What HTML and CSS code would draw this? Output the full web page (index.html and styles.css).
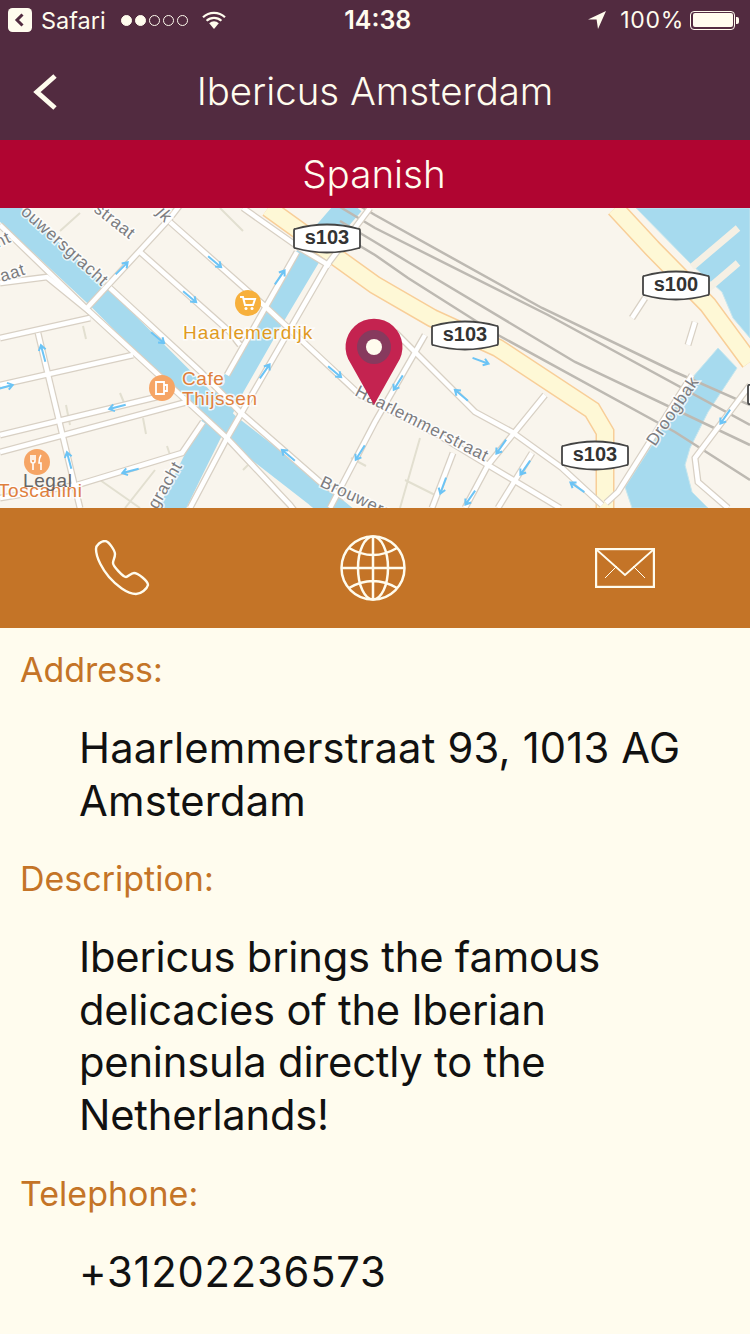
FILE: index.html
```html
<!DOCTYPE html>
<html lang="en">
<head>
<meta charset="utf-8">
<title>Ibericus Amsterdam</title>
<link rel="stylesheet" href="styles.css">
</head>
<body>
<header class="top">
  <div class="status">
    <div class="status-left">
      <svg class="crumb" viewBox="0 0 24 24"><rect width="24" height="24" rx="4.5" fill="#fffcee"/><path d="M14.5 6.5 9 12l5.5 5.5" fill="none" stroke="#522b40" stroke-width="3"/></svg>
      <span class="status-text">Safari</span>
      <div class="dots"><i class="dot on"></i><i class="dot on"></i><i class="dot"></i><i class="dot"></i><i class="dot"></i></div>
      <svg class="wifi" viewBox="0 0 24 18"><path d="M1 6.2a16 16 0 0 1 22 0M4.6 9.8a11 11 0 0 1 14.8 0" fill="none" stroke="#fffcee" stroke-width="2.2"/><path d="M7.2 12.2a7 7 0 0 1 9.6 0L12 18z" fill="#fffcee"/></svg>
    </div>
    <div class="clock">14:38</div>
    <div class="status-right">
      <svg class="loc" viewBox="0 0 18 18"><path d="M18 0 0 8.5h8.6L10 18z" fill="#fffcee"/></svg>
      <span class="status-text pct">100%</span>
      <div class="battery"><div class="battery-fill"></div></div>
      <div class="battery-nub"></div>
    </div>
  </div>
  <div class="nav">
    <svg class="back" viewBox="0 0 24 36"><path d="M22 2 4 18l18 16" fill="none" stroke="#fffcee" stroke-width="5"/></svg>
    <h1 class="title">Ibericus Amsterdam</h1>
    <span class="nav-end"></span>
  </div>
</header>
<div class="cuisine">Spanish</div>

<svg class="map" viewBox="0 0 750 300" role="img" aria-label="Map">
  <defs>
    <g id="streets">
      <path d="M0 17 90 104 227 230 290 297 300 310"/>
      <path d="M110 80 200 163 240 204 320 274 345 290"/>
      <path d="M87 100 170 10 180-3"/>
      <path d="M140 44 230 124 240 137"/>
      <path d="M170 14 267 100 360 187 440 228 488 257 560 300"/>
      <path d="M243 0 300 40 330 58"/>
      <path d="M395 124 415 144 475 204 512 224 562 260 602 297"/>
      <path d="M425 127 375 214 330 300"/>
      <path d="M545 187 488 257 465 300"/>
      <path d="M532 245 498 300"/>
      <path d="M453 245 432 300"/>
      <path d="M370 0 327 57 227 230 190 300"/>
      <path d="M297 44 227 167"/>
      <path d="M0 130 90 110"/>
      <path d="M0 177 133 147"/>
      <path d="M0 227 157 189"/>
      <path d="M0 244 187 194"/>
      <path d="M0 290 77 277 182 245 203 214"/>
      <path d="M0 75 47 69 90 104"/>
      <path d="M38 125 80 300"/>
      <path d="M750 177 695 250 698 274 728 300"/>
      <path d="M692 167 618 284 606 295"/>
      <path d="M688 137 695 114"/>
      <path d="M632 110 645 90"/>
    </g>
    <path id="arrow" d="M-9 0H8M3-3.5 8 0 3 3.5" fill="none" stroke="#6cc4f5" stroke-width="2"/>
    <path id="shield" d="M1 7Q33-2 65 7 66 7 66 9V24Q66 26 65 26 33 35 1 26 0 26 0 24V9Q0 7 1 7Z" fill="#fff" stroke="#444" stroke-width="1.8"/>
  </defs>

  <rect width="750" height="300" fill="#f9f5ed"/>
  <g class="minor">
    <path d="M60 23 80 5M220 0 243 23M83 118l3 13M120 185l5 12M66 197l4 20M143 210l3 16M167 238l4 12M243 262l8-8M100 272l40 28M155 262l-30 38M351 250l15 8M420 230l-20 70M405 272l30 15"/>
  </g>
  <path class="water" d="M636 0H750V130L733 110 722 84 692 57Z"/>
  <path class="water" d="M718 140 692 170 652 237 625 279 632 300H708L692 284 685 257 690 240 708 204 737 160Z"/>
  <path class="canal" d="M-5-8 97 87 227 217 317 287 345 310"/>
  <path class="canal" d="M352-5 313 40 273 107 233 177 190 264 170 305"/>
  <path class="pier" d="M692 59 738 20M703 85 738 55"/>

  <path class="rail" d="M340-14 375 7 542 100 675 164 750 197"/>
  <path class="rail" d="M340-1 375 20 548 107 750 217"/>
  <path class="rail" d="M340 13 375 34 408 54 575 154 750 237"/>
  <path class="rail" d="M340 26 375 47 408 70 498 127 675 224 750 272"/>

  <g class="hw-case"><path d="M268 0 375 77 432 110 498 140 592 202 605 224 605 300"/><path d="M615 0 652 40 708 97 750 154"/></g>
  <g class="hw-fill"><path d="M268 0 375 77 432 110 498 140 592 202 605 224 605 300"/><path d="M615 0 652 40 708 97 750 154"/></g>

  <use href="#streets" class="st-case"/>
  <use href="#streets" class="st-fill"/>

  <g>
    <use href="#arrow" transform="translate(122 60) rotate(-45)"/>
    <use href="#arrow" transform="translate(215 54) rotate(40)"/>
    <use href="#arrow" transform="translate(190 89) rotate(40)"/>
    <use href="#arrow" transform="translate(158 130) rotate(40)"/>
    <use href="#arrow" transform="translate(280 69) rotate(-55)"/>
    <use href="#arrow" transform="translate(265 163) rotate(-55)"/>
    <use href="#arrow" transform="translate(335 164) rotate(40)"/>
    <use href="#arrow" transform="translate(43 145) rotate(-105)"/>
    <use href="#arrow" transform="translate(5 179) rotate(-15)"/>
    <use href="#arrow" transform="translate(117 199) rotate(165)"/>
    <use href="#arrow" transform="translate(69 252) rotate(-105)"/>
    <use href="#arrow" transform="translate(130 263) rotate(165)"/>
    <use href="#arrow" transform="translate(288 247) rotate(-140)"/>
    <use href="#arrow" transform="translate(360 245) rotate(122)"/>
    <use href="#arrow" transform="translate(398 175) rotate(122)"/>
    <use href="#arrow" transform="translate(481 153) rotate(20)"/>
    <use href="#arrow" transform="translate(461 187) rotate(-140)"/>
    <use href="#arrow" transform="translate(501 239) rotate(125)"/>
    <use href="#arrow" transform="translate(525 260) rotate(125)"/>
    <use href="#arrow" transform="translate(443 278) rotate(110)"/>
    <use href="#arrow" transform="translate(470 290) rotate(125)"/>
    <use href="#arrow" transform="translate(577 279) rotate(-145)"/>
    <use href="#arrow" transform="translate(725 209) rotate(125)"/>
  </g>

  <g class="road-label">
    <text transform="translate(20 5) rotate(42)">ouwersgracht</text>
    <text transform="translate(93 3) rotate(38)">straat</text>
    <text transform="translate(-4 76) rotate(-18)">raat</text>
    <text transform="translate(-2 40) rotate(-25)">ht</text>
    <text transform="translate(156 5) rotate(50)">jk</text>
    <text transform="translate(157 302) rotate(-60)">gracht</text>
    <text transform="translate(319 278) rotate(25)">Brouwers</text>
    <text transform="translate(354 187) rotate(27)">Haarlemmerstraat</text>
    <text transform="translate(655 239) rotate(-56)">Droogbak</text>
  </g>

  <g class="poi-label">
    <text class="poi-yellow" x="183" y="131">Haarlemerdijk</text>
    <text class="poi-orange" x="182" y="177">Cafe</text>
    <text class="poi-orange" x="182" y="197">Thijssen</text>
    <text class="poi-orange" x="-2" y="289">Toscanini</text>
    <text class="poi-gray" x="23" y="279">Legal</text>
  </g>

  <circle cx="248" cy="95" r="13" fill="#f7b03c"/>
  <path d="M240 89h3l2 8h8l2-6h-11" fill="none" stroke="#fff" stroke-width="2"/>
  <circle cx="246" cy="100.500" r="1.500" fill="#fff"/>
  <circle cx="252" cy="100.500" r="1.500" fill="#fff"/>
  <circle cx="162" cy="180" r="13" fill="#f6a565"/>
  <path d="M156 174h8v12h-8zM164 177h3v6h-3z" fill="none" stroke="#fff" stroke-width="1.8"/>
  <circle cx="37" cy="254" r="13" fill="#f6a565"/>
  <path d="M31 247v6q0 2 2 2v7M33 247v5M35 247v6q0 2-2 2M41 247q-2 3-2 8h2v7" fill="none" stroke="#fff" stroke-width="1.6"/>

  <use href="#shield" transform="translate(294 14)"/>
  <text class="shield-text" x="327" y="36">s103</text>
  <use href="#shield" transform="translate(432 111)"/>
  <text class="shield-text" x="465" y="133">s103</text>
  <use href="#shield" transform="translate(643 61)"/>
  <text class="shield-text" x="676" y="83">s100</text>
  <use href="#shield" transform="translate(562 231)"/>
  <text class="shield-text" x="595" y="253">s103</text>
  <use href="#shield" transform="translate(748 170)"/>

  <path d="M374 197 351 156A28.500 28.500 0 1 1 397 156Z" fill="#c42350"/>
  <circle cx="374" cy="139" r="17" fill="#873a5e"/>
  <circle cx="374" cy="139" r="8" fill="#fffcee"/>
</svg>

<nav class="actions">
  <svg class="ic-phone" viewBox="0 0 56 56"><path d="M11 1C7 1 2 5 2 9 2 18 9 30 15 37 22 45 33 54 42 54 47 54 53 49 54 45 54 41 44 33 40 33 37 33 34 37 32 37 29 37 19 26 19 23 19 20 21 18 21 14 21 11 15 1 11 1Z" fill="none" stroke="#fffcee" stroke-width="2.400"/></svg>
  <svg class="ic-globe" viewBox="0 0 66 66"><g fill="none" stroke="#fffcee" stroke-width="2.500"><circle cx="33" cy="33" r="31.500"/><ellipse cx="33" cy="33" rx="15" ry="31.500"/><path d="M33 1.500v63M1.500 33h63M9 13q24 14 48 0M9 53q24-14 48 0"/></g></svg>
  <svg class="ic-mail" viewBox="0 0 60 40"><rect x="1" y="1" width="58" height="38" fill="none" stroke="#fffcee" stroke-width="2.400"/><path d="M2 2l28 25L58 2" fill="none" stroke="#fffcee" stroke-width="1.800"/><path d="M10 30 22 18M50 30 38 18" fill="none" stroke="#fffcee" stroke-width="1"/></svg>
</nav>

<main class="details">
  <section class="field">
    <h2 class="label">Address:</h2>
    <p class="value value-address">Haarlemmerstraat 93, 1013 AG Amsterdam</p>
  </section>
  <section class="field">
    <h2 class="label">Description:</h2>
    <p class="value value-text">Ibericus brings the famous delicacies of the Iberian peninsula directly to the Netherlands!</p>
  </section>
  <section class="field">
    <h2 class="label">Telephone:</h2>
    <p class="value value-phone">+31202236573</p>
  </section>
</main>
</body>
</html>
```
FILE: styles.css
```css
* { box-sizing: border-box; }
html, body { margin: 0; padding: 0; }
body {
  width: 750px;
  height: 1334px;
  overflow: hidden;
  background: #fffcee;
  font-family: Inter, "Liberation Sans", sans-serif;
  color: #111;
}
.top { background: #522b40; color: #fffcee; height: 140px; }
.status {
  height: 40px;
  display: grid;
  grid-template-columns: 1fr auto 1fr;
  align-items: center;
  padding: 0 11px 0 8px;
}
.status-left, .status-right { display: flex; align-items: center; }
.status-right { justify-content: flex-end; }
.status-text { font-size: 23.5px; font-weight: 400; }
.pct { font-size: 23px; letter-spacing: .7px; }
.crumb { width: 24px; height: 24px; margin-right: 9px; }
.dots { display: flex; gap: 3px; margin-left: 15px; }
.dot { width: 11px; height: 11px; border-radius: 50%; border: 1.5px solid #fffcee; }
.dot.on { background: #fffcee; }
.wifi { width: 24px; height: 18px; margin-left: 14px; }
.clock { font-size: 25px; font-weight: 600; margin-left: 8.5px; }
.loc { width: 18px; height: 18px; margin-right: 14px; }
.battery {
  width: 45px;
  height: 19px;
  margin-left: 6px;
  border: 1px solid #fffcee;
  border-radius: 4px;
  padding: 1.5px;
}
.battery-fill { width: 100%; height: 100%; background: #fffcee; border-radius: 2px; }
.battery-nub { width: 3px; height: 7px; background: #fffcee; border-radius: 0 2px 2px 0; margin-left: 1px; }
.nav {
  height: 100px;
  display: grid;
  grid-template-columns: 1fr auto 1fr;
  align-items: center;
  padding: 4px 31px 0 33px;
}
.back { width: 24px; height: 36px; }
.title { margin: 0 0 2px -2px; font-size: 38.4px; font-weight: 300; }
.cuisine {
  height: 68px;
  background: #b00531;
  color: #fffcee;
  font-size: 38.6px;
  font-weight: 300;
  line-height: 68px;
  text-align: center;
  padding-right: 2px;
}
.map { display: block; width: 750px; height: 300px; }
.minor path { fill: none; stroke: #e2dfd0; stroke-width: 2; }
.water { fill: #a6daee; stroke: #c6e6ee; stroke-width: 1; }
.canal { fill: none; stroke: #a6daee; stroke-width: 25; }
.pier { fill: none; stroke: #f5f0e4; stroke-width: 7; }
.rail { fill: none; stroke: #bdb9b2; stroke-width: 2.5; }
.hw-case path { fill: none; stroke: #f8ce98; stroke-width: 19; }
.hw-fill path { fill: none; stroke: #fef8d6; stroke-width: 16; }
.st-case { fill: none; stroke: #d8d0c4; stroke-width: 7; }
.st-fill { fill: none; stroke: #fff; stroke-width: 4.5; }
.road-label text {
  font-family: "Liberation Sans", sans-serif;
  font-size: 17px;
  fill: #7c7c80;
  stroke: #fff;
  stroke-width: 3px;
  stroke-opacity: .75;
  paint-order: stroke;
  letter-spacing: .7px;
}
.poi-label text {
  font-family: "Liberation Sans", sans-serif;
  font-size: 19px;
  stroke: #fff;
  stroke-width: 3px;
  stroke-opacity: .8;
  paint-order: stroke;
  letter-spacing: .6px;
}
.poi-label .poi-yellow { fill: #e09a1f; letter-spacing: 1px; }
.poi-label .poi-orange { fill: #e0803c; }
.poi-label .poi-gray { fill: #666; stroke: none; }
.shield-text {
  font-family: "Liberation Sans", sans-serif;
  font-size: 20px;
  font-weight: 700;
  fill: #333;
  text-anchor: middle;
}
.actions {
  height: 120px;
  background: #c47427;
  display: grid;
  grid-template-columns: repeat(3, 250px);
  justify-items: center;
  align-items: center;
}
.ic-phone { width: 56px; height: 56px; margin: 0 6px 0 0; }
.ic-globe { width: 66px; height: 66px; margin-right: 5px; }
.ic-mail { width: 60px; height: 40px; }
.details { padding: 22px 40px 0 20px; }
.field { margin-bottom: 32px; }
.label { margin: 0; font-size: 34px; font-weight: 400; line-height: 40px; color: #c47427; }
.value { margin: 32px 0 0 59px; font-size: 41.7px; font-weight: 400; line-height: 52.6px; }
.value-address { letter-spacing: .2px; }
.value-text { letter-spacing: -.2px; }
.value-phone { letter-spacing: .8px; }
```
